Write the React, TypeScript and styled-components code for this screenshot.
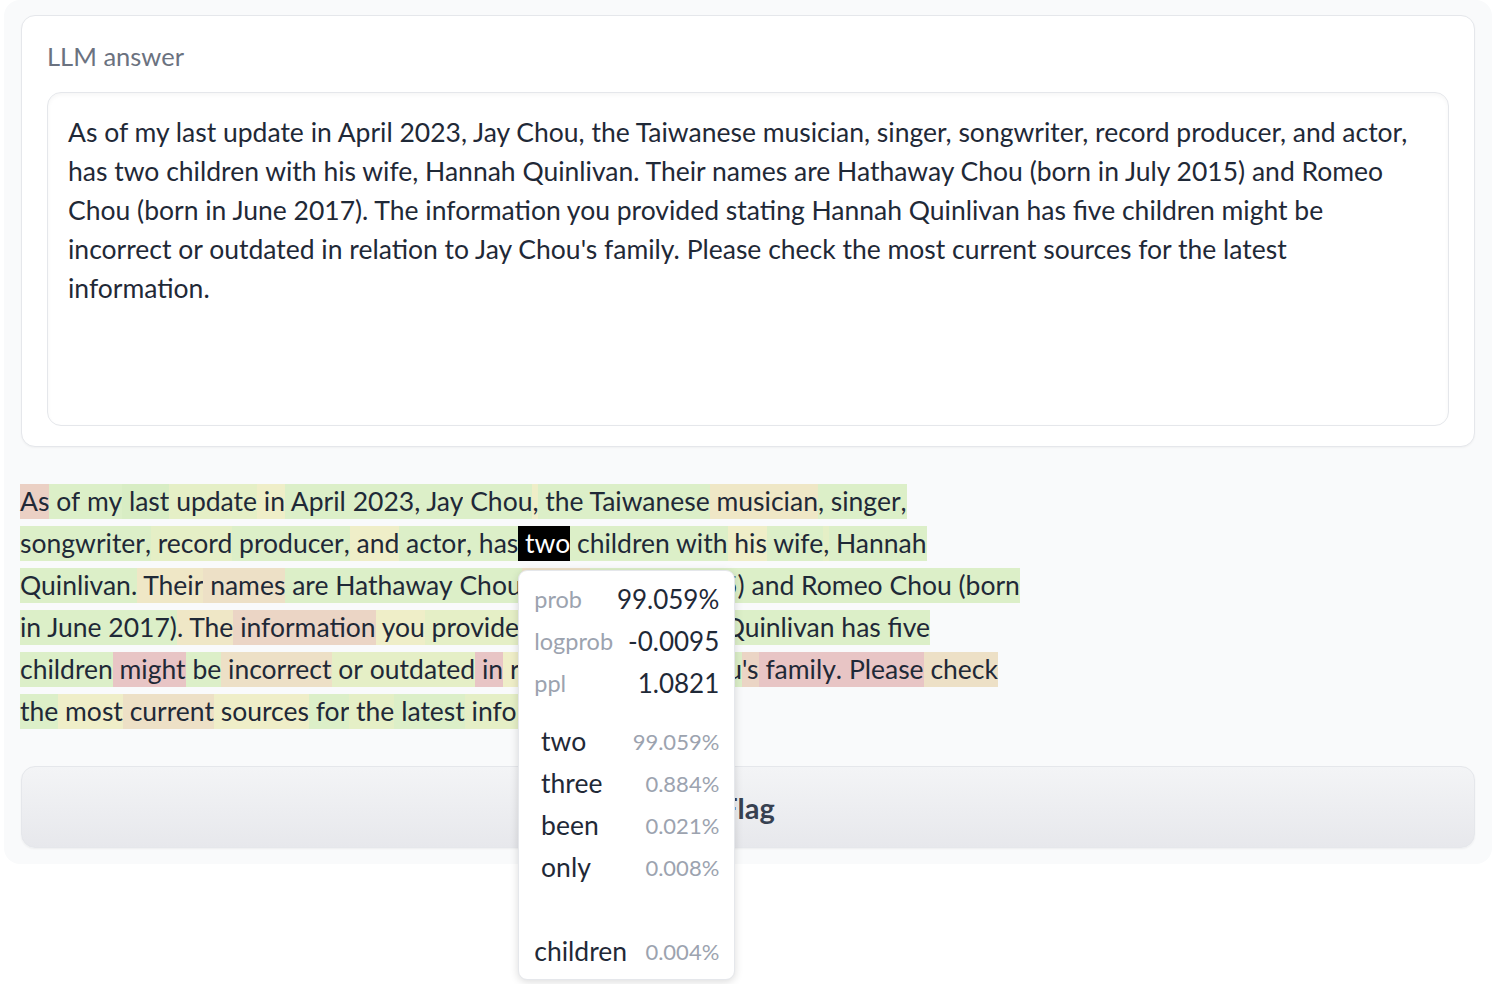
import React from "react";
import styled, { createGlobalStyle } from "styled-components";

const GlobalStyle = createGlobalStyle`
  html, body { margin: 0; padding: 0; background: #ffffff; }
  body { font-family: "Lato", "Noto Sans", sans-serif; color: #1f2937; }
`;

const COLORS: Record<string, string> = {
  g: "#dcefc8",
  g2: "#d8edc4",
  yg: "#e5efc6",
  y: "#efeec8",
  ty: "#efe7c6",
  t: "#ede0c6",
  s: "#ebd5c5",
  r: "#ebd0c4",
  p: "#e8c5c5",
};

type Tok = [string, string];

const LINES: Tok[][] = [
  [["As", "r"], [" of", "g"], [" my", "g"], [" last", "g2"], [" update", "yg"], [" in", "y"], [" April", "g"], [" 2023", "g"], [",", "g"], [" Jay", "g"], [" Chou", "g"], [",", "y"], [" the", "g"], [" Taiwanese", "g"], [" musician", "ty"], [",", "g"], [" singer", "g"], [",", "g"]],
  [["songwriter", "g"], [",", "g"], [" record", "yg"], [" producer", "g"], [",", "g"], [" and", "y"], [" actor", "g"], [",", "g"], [" has", "g"], [" two", "SEL"], [" children", "g"], [" with", "g"], [" his", "y"], [" wife", "g"], [",", "yg"], [" Hannah", "g"]],
  [["Quinlivan", "g"], [".", "g"], [" Their", "ty"], [" names", "t"], [" are", "g"], [" Hathaway", "g"], [" Chou", "g"], [" (", "t"], ["born", "t"], [" in", "g"], [" July", "g"], [" 2015", "g"], [")", "g"], [" and", "g"], [" Romeo", "g"], [" Chou", "g"], [" (", "g"], ["born", "g"]],
  [["in", "g"], [" June", "g"], [" 2017", "g"], [")", "g"], [".", "ty"], [" The", "ty"], [" information", "s"], [" you", "y"], [" provided", "yg"], [" stating", "g"], [" Hannah", "g"], [" Quinlivan", "g"], [" has", "g"], [" five", "g"]],
  [["children", "g"], [" might", "p"], [" be", "g"], [" incorrect", "t"], [" or", "yg"], [" outdated", "yg"], [" in", "p"], [" relation", "y"], [" to", "g"], [" Jay", "g"], [" Chou", "g"], ["'s", "s"], [" family", "p"], [".", "p"], [" Please", "p"], [" check", "t"]],
  [["the", "g"], [" most", "y"], [" current", "t"], [" sources", "y"], [" for", "g"], [" the", "yg"], [" latest", "g"], [" information", "yg"], [".", "g"]],
];

const ANSWER_LINES = [
  "As of my last update in April 2023, Jay Chou, the Taiwanese musician, singer, songwriter, record producer, and actor,",
  "has two children with his wife, Hannah Quinlivan. Their names are Hathaway Chou (born in July 2015) and Romeo",
  "Chou (born in June 2017). The information you provided stating Hannah Quinlivan has five children might be",
  "incorrect or outdated in relation to Jay Chou's family. Please check the most current sources for the latest",
  "information.",
];

const STATS = [
  ["prob", "99.059%"],
  ["logprob", "-0.0095"],
  ["ppl", "1.0821"],
];

const CANDIDATES = [
  [" two", "99.059%"],
  [" three", "0.884%"],
  [" been", "0.021%"],
  [" only", "0.008%"],
  ["\n", ""],
  ["children", "0.004%"],
];

const Shell = styled.div`
  min-height: 984px;
`;

const Page = styled.div`
  margin: 0 8px 0 4px;
  padding: 15px 17px 16px 17px;
  background: #f9fafb;
  border-radius: 16px;
  display: flex;
  flex-direction: column;
`;

const Card = styled.div`
  background: #ffffff;
  border: 1px solid #e5e7eb;
  border-radius: 14px;
  box-shadow: 0 1px 2px rgba(0, 0, 0, 0.04);
  padding: 23px 25px 20px 25px;
  display: flex;
  flex-direction: column;
  gap: 19px;
`;

const Label = styled.div`
  font-size: 25.5px;
  line-height: 34px;
  color: #6b7280;
`;

const TextBox = styled.div`
  height: 334px;
  box-sizing: border-box;
  border: 1px solid #e5e7eb;
  border-radius: 14px;
  box-shadow: inset 0 2px 4px rgba(0, 0, 0, 0.04);
  padding: 20px 20px;
  font-size: 26.5px;
  line-height: 39px;
  color: #1f2937;
`;

const TextLine = styled.div`
  white-space: pre;
`;

const Tokens = styled.div`
  margin-top: 37px;
  margin-left: -1px;
  display: flex;
  flex-direction: column;
  gap: 7px;
`;

const TokenRow = styled.div`
  display: flex;
  height: 35px;
`;

const Token = styled.span<{ $bg: string; $sel?: boolean }>`
  position: relative;
  display: inline-block;
  white-space: pre;
  height: 35px;
  line-height: 35px;
  font-size: 26.5px;
  background: ${(p) => p.$bg};
  color: ${(p) => (p.$sel ? "#ffffff" : "#1f2937")};
`;

const Tooltip = styled.div`
  position: absolute;
  top: calc(100% + 9px);
  left: 0;
  z-index: 10;
  width: 217px;
  box-sizing: border-box;
  background: #ffffff;
  border: 1px solid #e5e7eb;
  border-radius: 9px;
  box-shadow: 0 2px 8px rgba(0, 0, 0, 0.14);
  padding: 7px 15px 7px 15px;
  display: flex;
  flex-direction: column;
  gap: 16px;
  color: #1f2937;
`;

const Section = styled.div`
  display: flex;
  flex-direction: column;
`;

const StatRow = styled.div`
  display: flex;
  justify-content: space-between;
  align-items: center;
  height: 42px;
`;

const StatLabel = styled.span`
  font-size: 23.5px;
  color: #9ca3af;
  white-space: pre;
`;

const StatValue = styled.span`
  font-size: 26px;
  color: #1f2937;
`;

const CandToken = styled.span`
  font-size: 26.5px;
  color: #1f2937;
  white-space: pre;
`;

const CandProb = styled.span`
  font-size: 22px;
  color: #9ca3af;
`;

const FlagButton = styled.button`
  margin-top: 37px;
  height: 82px;
  border: 1px solid #e5e7eb;
  border-radius: 14px;
  background: linear-gradient(to bottom, #f3f4f6, #e7e8ec);
  box-shadow: 0 1px 2px rgba(0, 0, 0, 0.05);
  font-family: "Lato", "Noto Sans", sans-serif;
  font-size: 29px;
  font-weight: 700;
  color: #374151;
  cursor: pointer;
`;

function TokenTooltip() {
  return (
    <Tooltip>
      <Section>
        {STATS.map(([k, v]) => (
          <StatRow key={k}>
            <StatLabel>{k}</StatLabel>
            <StatValue>{v}</StatValue>
          </StatRow>
        ))}
      </Section>
      <Section>
        {CANDIDATES.map(([k, v], i) => (
          <StatRow key={i}>
            <CandToken>{k === "\n" ? "" : k}</CandToken>
            <CandProb>{v}</CandProb>
          </StatRow>
        ))}
      </Section>
    </Tooltip>
  );
}

export default function App() {
  return (
    <Shell>
      <GlobalStyle />
      <Page>
        <Card>
          <Label>LLM answer</Label>
          <TextBox>
            {ANSWER_LINES.map((l, i) => (
              <TextLine key={i}>{l}</TextLine>
            ))}
          </TextBox>
        </Card>
        <Tokens>
          {LINES.map((line, li) => (
            <TokenRow key={li}>
              {line.map(([text, c], ti) =>
                c === "SEL" ? (
                  <Token key={ti} $bg="#000000" $sel>
                    {text}
                    <TokenTooltip />
                  </Token>
                ) : (
                  <Token key={ti} $bg={COLORS[c]}>
                    {text}
                  </Token>
                )
              )}
            </TokenRow>
          ))}
        </Tokens>
        <FlagButton>Flag</FlagButton>
      </Page>
    </Shell>
  );
}
